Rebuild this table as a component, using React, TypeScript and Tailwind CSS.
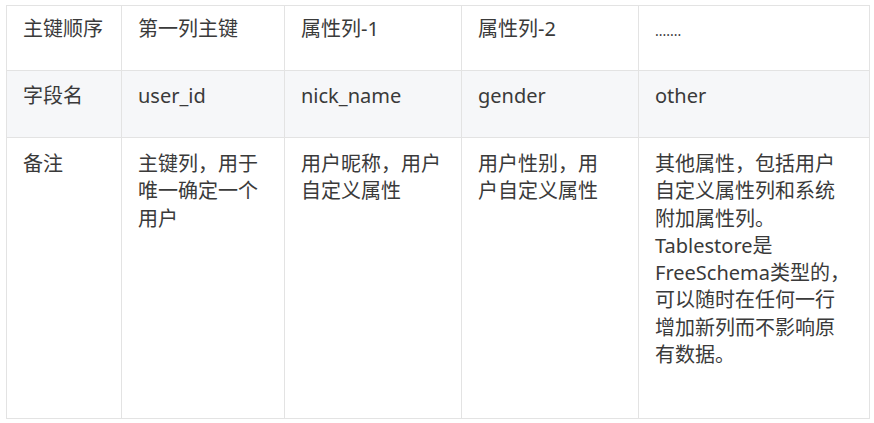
export default function App() {
  const cell = "border border-[#e3e3e3] align-top pl-4 pr-4";
  return (
    <div className="w-[874px] h-[423px] bg-white pt-[5px] pl-[6px] font-['Noto_Sans','Noto_Sans_CJK_SC',sans-serif] text-[20px] leading-[27.3px] text-[#3a3a3a]">
      <table className="table-fixed border-collapse w-[863px]">
        <colgroup>
          <col className="w-[115px]" />
          <col className="w-[163px]" />
          <col className="w-[177px]" />
          <col className="w-[177px]" />
          <col className="w-[231px]" />
        </colgroup>
        <tbody>
          <tr className="h-[65px]">
            <td className={cell + " pt-[9px]"}>主键顺序</td>
            <td className={cell + " pt-[9px]"}>第一列主键</td>
            <td className={cell + " pt-[9px]"}>属性列-1</td>
            <td className={cell + " pt-[9px]"}>属性列-2</td>
            <td className={cell + " pt-[9px]"}>
              <span className="text-[14px]">.......</span>
            </td>
          </tr>
          <tr className="h-[67px] bg-[#f6f7f9]">
            <td className={cell + " pt-[11px]"}>字段名</td>
            <td className={cell + " pt-[11px]"}>user_id</td>
            <td className={cell + " pt-[11px]"}>nick_name</td>
            <td className={cell + " pt-[11px]"}>gender</td>
            <td className={cell + " pt-[11px]"}>other</td>
          </tr>
          <tr className="h-[281px]">
            <td className={cell + " pt-[12px]"}>备注</td>
            <td className={cell + " pt-[12px]"}>
              主键列，用于
              <br />
              唯一确定一个
              <br />
              用户
            </td>
            <td className={cell + " pt-[12px]"}>
              用户昵称，用户
              <br />
              自定义属性
            </td>
            <td className={cell + " pt-[12px]"}>
              用户性别，用
              <br />
              户自定义属性
            </td>
            <td className={cell + " pt-[12px]"}>
              其他属性，包括用户
              <br />
              自定义属性列和系统
              <br />
              附加属性列。
              <br />
              Tablestore是
              <br />
              FreeSchema类型的，
              <br />
              可以随时在任何一行
              <br />
              增加新列而不影响原
              <br />
              有数据。
            </td>
          </tr>
        </tbody>
      </table>
    </div>
  );
}
